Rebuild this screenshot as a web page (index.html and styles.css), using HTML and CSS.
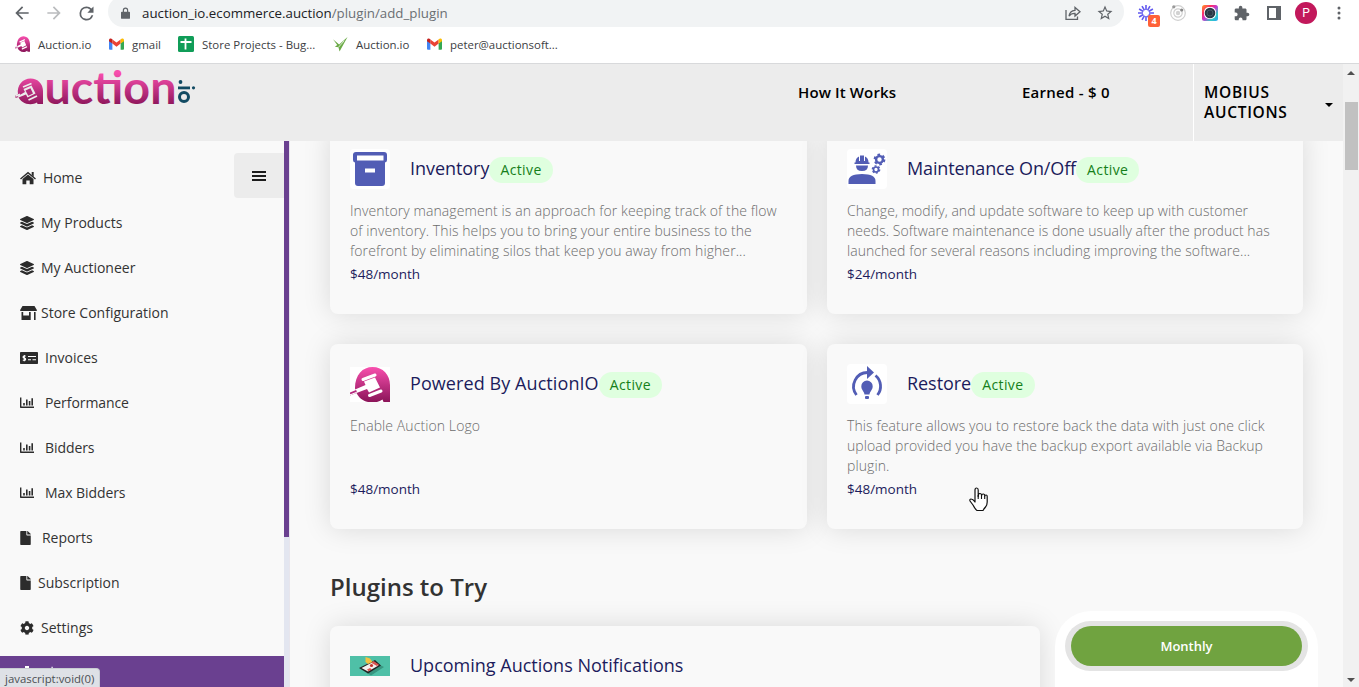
FILE: index.html
```
<!DOCTYPE html>
<html lang="en">
<head>
<meta charset="utf-8">
<title>Plugins</title>
<link rel="stylesheet" href="styles.css">
</head>
<body>
<svg class="defs" width="0" height="0">
  <defs>
    <linearGradient id="pink" x1="0" y1="0" x2="0" y2="1"><stop offset="0" stop-color="#f84fae"/><stop offset="1" stop-color="#8a1458"/></linearGradient>
    <linearGradient id="rainbow" x1="0" y1="0" x2="1" y2="1"><stop offset="0" stop-color="#ff9a1f"/><stop offset=".3" stop-color="#ff2d6a"/><stop offset=".5" stop-color="#c33bd0"/><stop offset=".75" stop-color="#35c9c5"/><stop offset="1" stop-color="#28a7f5"/></linearGradient>
    <symbol id="gavel" viewBox="0 0 40 35">
      <path fill="url(#pink)" d="M22.500 0C33 0 40 8 40 18V35H33.500L32.500 32.500C29.500 34.500 26.500 35.500 22.500 35.500C15 35.500 9 31.500 6.500 26L0 28.500V24.500L5 22.500C4.500 8 12.500 0 22.500 0Z"/>
      <path fill="#fff" d="M14 14.500L25 10.500L30 20.500L19 25.500L17 22L6.500 26L5 22.500L15.500 18Z"/>
      <path fill="#fff" d="M0 23.500L5 21.500L6.500 26L0 28.500Z"/>
      <path stroke="#b52a7d" stroke-width="1.800" d="M0 26.500L6.500 23.800"/>
      <path stroke="#fff" stroke-width="3" stroke-linecap="round" d="M13 12.500L25 8M19.500 28.500L31 24"/>
    </symbol>
    <symbol id="gmail" viewBox="0 0 16 12">
      <path fill="#4285f4" d="M0 2V11a1 1 0 0 0 1 1H3.600V5Z"/><path fill="#34a853" d="M12.400 5V12H15a1 1 0 0 0 1-1V2Z"/>
      <path fill="#ea4335" d="M3.600 1.200L8 4.500L12.400 1.200V5.500L8 8.800L3.600 5.500Z"/><path fill="#c5221f" d="M0 1.800C0 0 2-.6 3.600.8V5.500L0 3Z"/><path fill="#fbbc04" d="M16 1.800C16 0 14-.6 12.400.8V5.500L16 3Z"/>
    </symbol>
    <symbol id="layers" viewBox="0 0 512 512"><path d="M12.410 148.020l232.940 105.670c6.800 3.090 14.490 3.090 21.290 0l232.940-105.670c16.550-7.510 16.550-32.520 0-40.030L266.650 2.310a25.607 25.607 0 0 0-21.290 0L12.410 107.980c-16.550 7.510-16.550 32.530 0 40.040zm487.180 88.280l-58.090-26.330-161.640 73.270c-7.560 3.430-15.590 5.170-23.860 5.170s-16.290-1.740-23.860-5.170L70.510 209.970l-58.100 26.330c-16.550 7.500-16.550 32.500 0 40l232.940 105.590c6.800 3.080 14.490 3.080 21.290 0L499.590 276.300c16.550-7.500 16.550-32.500 0-40zm0 127.800l-57.870-26.230-161.860 73.370c-7.560 3.430-15.590 5.170-23.860 5.170s-16.290-1.740-23.860-5.170L70.290 337.870 12.410 364.100c-16.550 7.500-16.550 32.500 0 40l232.940 105.590c6.800 3.080 14.490 3.080 21.290 0L499.590 404.100c16.550-7.500 16.550-32.500 0-40z"/></symbol>
    <symbol id="file" viewBox="0 0 384 512"><path d="M224 136V0H24C10.700 0 0 10.700 0 24v464c0 13.300 10.700 24 24 24h336c13.300 0 24-10.700 24-24V160H248c-13.200 0-24-10.800-24-24zm160-14.100v6.100H256V0h6.100c6.400 0 12.500 2.500 17 7l97.900 98c4.500 4.500 7 10.600 7 16.900z"/></symbol>
    <symbol id="cog" viewBox="0 0 512 512"><path d="M487.400 315.700l-42.600-24.600c4.300-23.200 4.300-47 0-70.200l42.600-24.600c4.900-2.800 7.100-8.600 5.500-14-11.100-35.600-30-67.800-54.700-94.600-3.800-4.100-10-5.100-14.800-2.300L380.800 110c-17.900-15.400-38.500-27.300-60.800-35.100V25.800c0-5.600-3.900-10.500-9.400-11.700-36.700-8.200-74.300-7.800-109.200 0-5.500 1.200-9.400 6.100-9.400 11.700V75c-22.200 7.900-42.800 19.800-60.800 35.100L88.700 85.500c-4.900-2.800-11-1.900-14.800 2.300-24.700 26.700-43.600 58.900-54.700 94.600-1.700 5.400.6 11.200 5.500 14L67.300 221c-4.300 23.200-4.300 47 0 70.200l-42.600 24.600c-4.900 2.800-7.100 8.600-5.500 14 11.100 35.600 30 67.800 54.700 94.600 3.800 4.100 10 5.100 14.800 2.300l42.600-24.600c17.900 15.400 38.500 27.300 60.800 35.100v49.200c0 5.600 3.900 10.500 9.400 11.700 36.700 8.200 74.300 7.800 109.200 0 5.500-1.200 9.400-6.100 9.400-11.700v-49.200c22.200-7.900 42.800-19.800 60.800-35.100l42.600 24.600c4.900 2.800 11 1.900 14.800-2.300 24.700-26.700 43.600-58.900 54.700-94.600 1.500-5.500-.7-11.300-5.600-14.100zM256 336c-44.100 0-80-35.900-80-80s35.900-80 80-80 80 35.900 80 80-35.900 80-80 80z"/></symbol>
    <symbol id="chart" viewBox="0 0 14 14"><path d="M0 1.500H1.400V10.500H14V12H.7A.7.7 0 0 1 0 11.300ZM3.200 7H4.800V9.500H3.200ZM6 3.500H7.600V9.500H6ZM8.800 5H10.400V9.500H8.800ZM11.400 2.300H13V9.500H11.400Z"/></symbol>
  </defs>
</svg>

<div class="window">
  <header class="browser">
    <div class="toolbar">
      <svg class="tb back" viewBox="0 0 24 24"><path d="M20 11H7.830l5.590-5.590L12 4l-8 8 8 8 1.410-1.410L7.830 13H20v-2z"/></svg>
      <svg class="tb fwd" viewBox="0 0 24 24"><path d="M12 4l-1.410 1.410L16.170 11H4v2h12.170l-5.580 5.590L12 20l8-8z"/></svg>
      <svg class="tb reload" viewBox="0 0 24 24"><path d="M17.650 6.350A7.958 7.958 0 0 0 12 4a8 8 0 1 0 7.730 10h-2.080A6 6 0 1 1 12 6c1.660 0 3.140.69 4.220 1.780L13 11h7V4l-2.350 2.350z"/></svg>
      <div class="omnibox">
        <svg class="lock" viewBox="0 0 10 13"><path fill="#5f6368" d="M1 5H2V3.500a3 3 0 0 1 6 0V5H9a1 1 0 0 1 1 1V12a1 1 0 0 1-1 1H1a1 1 0 0 1-1-1V6A1 1 0 0 1 1 5ZM3.300 5H6.700V3.500a1.700 1.700 0 0 0-3.400 0Z"/></svg>
        <span class="url"><b>auction_io.ecommerce.auction</b>/plugin/add_plugin</span>
        <svg class="share" viewBox="0 0 16 14"><path fill="none" stroke="#5f6368" stroke-width="1.300" d="M1 4V13.300H12.500V10.500M4 10C4.500 6.500 6.500 4.500 10 4.300V1.500L15 5.800L10 10V7.300C7.500 7.200 5.500 8 4 10Z"/></svg>
        <svg class="star" viewBox="0 0 24 24"><path fill="#5f6368" d="M22 9.240l-7.190-.62L12 2 9.190 8.630 2 9.240l5.460 4.730L5.820 21 12 17.270 18.180 21l-1.630-7.030L22 9.240zM12 15.400l-3.760 2.270 1-4.280-3.320-2.880 4.380-.38L12 6.100l1.710 4.040 4.380.38-3.320 2.880 1 4.280L12 15.400z"/></svg>
      </div>
      <div class="ext burst">
        <svg width="16" height="16" viewBox="-8 -8 16 16"><path stroke="#6259ef" stroke-width="1.600" d="M0-8V-3M0 8V3M-6.900-4L-2.600-1.500M6.900 4L2.600 1.500M6.900-4L2.600-1.500M-6.900 4L-2.600 1.500M-4-6.900L-1.500-2.600M4 6.900L1.500 2.600M4-6.900L1.500-2.600M-4 6.900L-1.500 2.600M-8 0H-3M8 0H3"/></svg>
        <span class="count">4</span>
      </div>
      <svg class="ext orbit" viewBox="0 0 16 16"><g fill="none" stroke="#d0d0d0" stroke-width="1.200"><circle cx="8" cy="8" r="7.300"/><circle cx="8" cy="8" r="4.200"/></g><circle cx="8" cy="8" r="2.200" fill="#d2d2d2"/><circle cx="3.800" cy="1.800" r="1.600" fill="#999"/><circle cx="11.700" cy="5" r="1.600" fill="#888"/></svg>
      <svg class="ext lens" viewBox="0 0 16 16"><rect width="16" height="16" rx="2.500" fill="url(#rainbow)"/><rect x="2" y="2" width="12" height="12" rx="5" fill="#fff"/><circle cx="8" cy="8" r="5.300" fill="#293744"/><circle cx="8" cy="8" r="3" fill="none" stroke="#52616c" stroke-width=".8"/></svg>
      <svg class="ext puzzle" viewBox="1 0 23 23"><path fill="#5f6368" d="M20.500 11H19V7c0-1.100-.9-2-2-2h-4V3.500C13 2.120 11.880 1 10.500 1S8 2.120 8 3.500V5H4c-1.100 0-1.990.9-1.990 2v3.800H3.500c1.490 0 2.700 1.210 2.700 2.700s-1.210 2.700-2.700 2.700H2V20c0 1.100.9 2 2 2h3.800v-1.500c0-1.490 1.210-2.700 2.700-2.700 1.490 0 2.700 1.210 2.700 2.700V22H17c1.100 0 2-.9 2-2v-4h1.500c1.380 0 2.500-1.120 2.500-2.500S21.880 11 20.500 11z"/></svg>
      <svg class="ext panel" viewBox="0 0 14 14"><path fill="#5f6368" fill-rule="evenodd" d="M0 0H14V14H0ZM2 2V12H9V2Z"/></svg>
      <span class="avatar">P</span>
      <svg class="dots" viewBox="0 0 4 14"><g fill="#5f6368"><circle cx="2" cy="2" r="1.500"/><circle cx="2" cy="7" r="1.500"/><circle cx="2" cy="12" r="1.500"/></g></svg>
    </div>
    <nav class="bookmarks">
      <a class="bm bm-a"><svg width="15" height="16" viewBox="0 0 40 36" preserveAspectRatio="none"><use href="#gavel"/></svg>Auction.io</a>
      <a class="bm bm-b"><svg width="15" height="12"><use href="#gmail"/></svg>gmail</a>
      <a class="bm bm-c"><svg width="16" height="16" viewBox="0 0 16 16"><rect width="16" height="16" rx="1.500" fill="#109d58"/><path stroke="#fff" stroke-width="1.800" d="M2.500 6H13.500M7.500 2.500V13.500"/></svg>Store Projects - Bug...</a>
      <a class="bm bm-d"><svg width="15" height="16" viewBox="0 0 16 16"><path fill="#6aaa45" d="M0 3L6.500 8.500L15.500.5L7 16L5.800 11.500L2 11L4.500 9Z"/><path stroke="#fff" stroke-width=".8" d="M5.800 11.500L12 4.500"/></svg>Auction.io</a>
      <a class="bm bm-e"><svg width="15" height="12"><use href="#gmail"/></svg>peter@auctionsoft...</a>
    </nav>
  </header>

  <div class="page">
    <div class="site">
      <header class="top">
        <div class="logo">
          <svg width="182" height="36" viewBox="0 0 182 36">
            <defs><linearGradient id="word" gradientUnits="userSpaceOnUse" x1="0" y1="2" x2="0" y2="35"><stop offset="0" stop-color="#f84fae"/><stop offset="1" stop-color="#8a1458"/></linearGradient></defs>
            <path fill="url(#word)" d="M15.500 7.500C23 7.500 28 13 28 20V33H22.500L22 31.500C20 32.700 18 33.200 15.500 33.200C9.500 33.200 5 30 3.500 26L.5 27V24.500L3 23.300C1.500 14 8 7.500 15.500 7.500Z"/>
            <path fill="#ececec" d="M8.500 18L16.500 14.500L20.500 22.500L12.500 26.500L11 23.500L3.500 26.500L3 25L10 21Z"/>
            <path stroke="#ececec" stroke-width="1.800" d="M8 16L16.500 12.500M13.500 29L22 25M1 25L5 23.300"/>
            <path fill="#b12a78" d="M10.500 19.500L15.500 17.300L18 22.500L13.300 24.700Z"/>
            <text class="word" x="29.500" y="33" textLength="132" lengthAdjust="spacingAndGlyphs" fill="url(#word)">uction</text>
            <g fill="#124b63"><circle cx="165.500" cy="11" r="1.900"/><rect x="163" y="15.500" width="12" height="2.800"/><circle cx="178.500" cy="16.800" r="1.600"/></g>
            <circle cx="169" cy="26" r="4.500" fill="none" stroke="#124b63" stroke-width="3"/>
          </svg>
        </div>
        <span class="how">How It Works</span>
        <span class="earned">Earned - $ 0</span>
        <div class="account"><span>MOBIUS<br>AUCTIONS</span><i class="caret"></i></div>
      </header>

      <div class="body">
        <aside class="side">
          <div class="menu">
            <div class="burger"><i></i><i></i><i></i></div>
            <a class="item home"><svg width="16" height="14" viewBox="0 0 16 14"><path d="M8 3.500L13.500 8V12.700A.6.6 0 0 1 13 13.300H9.700V9.500H6.300V13.300H3A.6.600 0 0 1 2.500 12.700V8Z"/><path fill="none" stroke="#2c2c2c" stroke-width="1.400" d="M.5 8L8 1.700L15.500 8"/><path d="M11.700 1H13.700V6L11.700 4Z"/></svg>Home</a>
            <a class="item layers"><svg width="14" height="14"><use href="#layers"/></svg>My Products</a>
            <a class="item layers"><svg width="14" height="14"><use href="#layers"/></svg>My Auctioneer</a>
            <a class="item store"><svg width="17" height="14" viewBox="0 0 17 14"><path d="M2.500 0H14.500L17 4.200Q17 5 16.200 5H.8Q0 5 0 4.200ZM1.500 6H3.200V9.500H9V6H10.700V14H1.500ZM14 6H15.600V14H14Z"/></svg>Store Configuration</a>
            <a class="item invoice"><svg width="18" height="12" viewBox="0 0 18 12"><rect width="18" height="12" rx=".8"/><path stroke="#fff" stroke-width="1.100" fill="none" d="M8 4.500H16M8 7.700H11M12.500 7.700H16M5.700 4H4.200Q3 4 3 5T4.300 6T5.600 7.200T4.300 8.200H2.800M4.300 3V9.300"/></svg>Invoices</a>
            <a class="item chart"><svg width="14" height="14"><use href="#chart"/></svg>Performance</a>
            <a class="item chart"><svg width="14" height="14"><use href="#chart"/></svg>Bidders</a>
            <a class="item chart"><svg width="14" height="14"><use href="#chart"/></svg>Max Bidders</a>
            <a class="item report"><svg width="11" height="14"><use href="#file"/></svg>Reports</a>
            <a class="item sub"><svg width="11" height="14"><use href="#file"/></svg>Subscription</a>
            <a class="item layers"><svg width="14" height="14"><use href="#cog"/></svg>Settings</a>
            <a class="item active"><svg width="34" height="14" viewBox="0 0 34 14"><path d="M5 0H9V4H14V14H0V4H5ZM31.500 .8H32.700V3H31.500Z"/></svg></a>
          </div>
          <div class="track"><i></i></div>
        </aside>

        <main class="content">
          <div class="grid">
            <section class="card">
              <div class="head"><svg class="pic" viewBox="0 0 40 40"><rect width="40" height="40" rx="4" fill="#fff"/><path fill="#525db5" d="M6 3H34Q37 3 37 6V11Q37 13 35 13.500V34Q35 37 32 37H8Q5 37 5 34V13.500Q3 13 3 11V6Q3 3 6 3Z"/><path fill="#fff" d="M7 6.500H33.500V11.500H7ZM15 19.500H25V23.500H15Z"/></svg><h3>Inventory</h3><span class="pill">Active</span></div>
              <p>Inventory management is an approach for keeping track of the flow<br>of inventory. This helps you to bring your entire business to the<br>forefront by eliminating silos that keep you away from higher...</p>
              <div class="price">$48/month</div>
            </section>
            <section class="card">
              <div class="head"><svg class="pic" viewBox="0 0 40 40"><rect width="40" height="40" rx="4" fill="#fff"/><g fill="#525db5"><path d="M1.500 35V32Q1.500 25 15 25T28.500 32V35ZM9 16.500H21Q21 22 15 22T9 16.500ZM7.500 15V13.500H8.500Q8.500 9 12 7.500V12H13V6.500H17V12H18V7.500Q21.500 9 21.500 13.500H22.500V15Z"/></g><g fill="none" stroke="#525db5"><circle cx="32.500" cy="10.500" r="3.400" stroke-width="2.400"/><circle cx="32.500" cy="10.500" r="4.900" stroke-width="2" stroke-dasharray="2.600 2.531"/><circle cx="29" cy="20.500" r="2.500" stroke-width="1.700"/><circle cx="29" cy="20.500" r="3.600" stroke-width="1.500" stroke-dasharray="1.900 1.870"/></g></svg><h3 class="t-maint">Maintenance On/Off</h3><span class="pill">Active</span></div>
              <p class="tight">Change, modify, and update software to keep up with customer<br>needs. Software maintenance is done usually after the product has<br>launched for several reasons including improving the software...</p>
              <div class="price">$24/month</div>
            </section>
            <section class="card">
              <div class="head"><svg class="pic gav" viewBox="0 0 40 35"><rect width="40" height="35" fill="#fff"/><use href="#gavel"/></svg><h3 class="t-power">Powered By AuctionIO</h3><span class="pill">Active</span></div>
              <p>Enable Auction Logo</p>
              <div class="price">$48/month</div>
            </section>
            <section class="card">
              <div class="head"><svg class="pic" viewBox="0 0 40 40"><rect width="40" height="40" rx="4" fill="#fff"/><g fill="none" stroke="#525db5" stroke-width="2.800"><path d="M9.500 31A14 14 0 0 1 21 8.500M28.500 11.500A14 14 0 0 1 30.500 31"/></g><g fill="#525db5"><path d="M20 2L27 8.500L20 15Z"/><path d="M20 16.500A5.700 5.700 0 0 1 25.700 22.200C25.700 26 23 27 22.500 30.500H17.500C17 27 14.300 26 14.300 22.200A5.700 5.700 0 0 1 20 16.500Z"/><rect x="18" y="32" width="4" height="3" rx="1"/></g></svg><h3>Restore</h3><span class="pill">Active</span></div>
              <p>This feature allows you to restore back the data with just one click<br>upload provided you have the backup export available via Backup<br>plugin.</p>
              <div class="price">$48/month</div>
            </section>
          </div>
          <h2>Plugins to Try</h2>
          <div class="try">
            <section class="card wide">
              <div class="head"><svg class="pic thumb" viewBox="0 0 40 20"><rect width="40" height="20" fill="#4fc0a7"/><path fill="#389680" d="M17 17L30 9L34 11L21 19.500Z"/><path fill="#222" d="M9 12L25 4L31 9.500L18 17.500Z"/><path fill="#f3f1ee" d="M11.500 12L24 5.500L28.500 9.500L18 15.500Z"/><path fill="#d9534f" d="M23 5L29 8.500L27 10L21.500 7ZM17 13.500L20 12L22 13.500L18.500 15.300Z"/><path fill="#f2c242" d="M15.500 1L20 2.500L22.500 6L18 8L15.500 6Z"/><circle cx="21.500" cy="9.500" r="1.600" fill="#c4302b"/></svg><h3>Upcoming Auctions Notifications</h3></div>
            </section>
            <aside class="billing"><div class="ring"><span>Monthly</span></div></aside>
          </div>
        </main>
      </div>
    </div>
    <div class="scrollbar"><i class="up"></i><b></b><i class="down"></i></div>
  </div>

  <div class="status">javascript:void(0)</div>
  <svg class="cursor" viewBox="0 0 19 25"><path fill="#fff" stroke="#111" stroke-width="1.200" stroke-linejoin="round" d="M6 15V3Q6 1 7.600 1T9.200 3V9.500Q9.200 6.500 10.900 6.500T12.600 8.500Q12.600 7 14.200 7T15.700 9Q15.700 8 17 8T18.200 10V15Q18.200 18 16.500 20T14 23.500H8Q6 22 4 18L1 14Q.5 12 2 12Q4 12 6 15Z"/><path stroke="#111" stroke-width="1.100" d="M9.200 8V12M12.500 8V12M15.700 9V12"/></svg>
</div>
</body>
</html>
```
FILE: styles.css
```
* { box-sizing: border-box; }
body { margin: 0; font-family: "Open Sans", "Noto Sans", sans-serif; background: #f9f9f9; }
svg { display: block; flex: none; }
.defs { position: absolute; }
.window { position: relative; width: 1359px; height: 687px; overflow: hidden; display: flex; flex-direction: column; }

/* browser bar */
.browser { flex: none; height: 64px; background: #fff; border-bottom: 1px solid #d8d9db; }
.toolbar { height: 26px; display: flex; align-items: center; padding-left: 12px; }
.tb { width: 20px; height: 20px; fill: #5f6368; margin-right: 12px; }
.fwd { fill: #babcbe; }
.reload { width: 21px; height: 21px; margin-right: 11px; }
.omnibox { width: 1016px; height: 31px; margin-top: -3px; padding: 3px 10px 0 13px; border-radius: 16px; background: #f1f3f4; display: flex; align-items: center; }
.lock { width: 9px; height: 12px; margin-right: 12px; }
.url { flex: 1; font-size: 13.3px; line-height: 20px; color: #6b6f73; }
.url b { font-weight: 400; color: #202124; }
.share { width: 16px; height: 14px; margin-right: 15px; }
.star { width: 18px; height: 18px; }
.ext { width: 16px; height: 16px; margin-right: 16px; }
.burst { position: relative; margin-left: 14px; }
.count { position: absolute; left: 10px; top: 10px; width: 12px; height: 12px; border-radius: 2px; background: #ff6238; color: #fff; font: 700 9px/12px "Open Sans", sans-serif; text-align: center; }
.puzzle { margin-right: 17px; }
.panel { width: 14px; height: 14px; margin-right: 14px; }
.avatar { width: 22px; height: 22px; border-radius: 50%; background: #c2185b; color: #fff; font: 12px/22px Roboto, sans-serif; text-align: center; margin-right: 20px; }
.dots { width: 4px; height: 14px; }
.bookmarks { height: 36px; display: flex; align-items: center; padding-left: 15px; }
.bm { display: flex; align-items: center; gap: 8px; font-size: 11.450px; color: #3c4043; white-space: nowrap; }
.bm-a { width: 94px; }
.bm-b { width: 69px; }
.bm-c { width: 155px; }
.bm-d { width: 94px; }

/* page frame */
.page { flex: 1; min-height: 0; display: flex; }
.site { width: 1343px; display: flex; flex-direction: column; }
.scrollbar { width: 16px; background: #f1f1f1; padding: 7px 2px 0; display: flex; flex-direction: column; align-items: center; position: relative; }
.scrollbar b { width: 13px; height: 68px; background: #c1c1c1; margin-top: 27px; }
.up { border: 4px solid transparent; border-top: 0; border-bottom: 4px solid #505050; }
.down { border: 4px solid transparent; border-bottom: 0; border-top: 4px solid #505050; margin-top: auto; margin-bottom: 5px; }

.top { position: relative; z-index: 2; flex: none; height: 77px; background: #ececec; display: flex; align-items: flex-start; font-weight: 600; color: #000; }
.logo { width: 798px; padding: 7px 0 0 15px; }
.logo svg { overflow: visible; }
.word { font: 700 45px Lato, sans-serif; }
.how { width: 224px; padding-top: 17px; font-size: 15px; line-height: 22px; letter-spacing: .12px; }
.earned { width: 171px; padding-top: 17px; font-size: 15px; line-height: 22px; letter-spacing: .25px; }
.account { width: 150px; height: 77px; border-left: 1px solid #fff; padding: 18px 10px 0; font-size: 15.500px; line-height: 20px; letter-spacing: .7px; display: flex; justify-content: space-between; }
.caret { margin-top: 21px; border: 4px solid transparent; border-top-color: #000; height: 0; border-bottom: 0; }

.body { flex: 1; min-height: 0; display: flex; }
.side { position: relative; z-index: 1; width: 290px; display: flex; background: #f9f9f9; }
.menu { position: relative; width: 284px; padding-top: 14px; overflow: hidden; }
.burger { position: absolute; right: 0; top: 12px; width: 50px; height: 45px; padding: 18px 18px 0; background: #ececec; border-radius: 4px 0 0 4px; }
.burger i { display: block; width: 14px; height: 2px; margin-bottom: 2px; background: #1c1c1c; }
.item { display: flex; align-items: center; height: 45px; padding-left: 20px; gap: 7px; font-size: 14px; color: #333; }
.item svg { fill: #2c2c2c; }
.home { letter-spacing: -.1px; }
.store { gap: 4px; }
.chart { gap: 11px; letter-spacing: -.08px; }
.report { gap: 11px; letter-spacing: -.05px; }
.item.active { align-items: flex-start; margin-top: 6px; padding-top: 10px; background: #6a4090; color: #fff; }
.item.active svg { fill: #fff; }
.track { width: 6px; background: #e3e6f0; border-right: 1px solid #e7e5ec; }
.track i { display: block; width: 5px; height: 396px; background: #6a4090; }

.content { flex: 1; height: 546px; overflow: hidden; padding-left: 40px; background: #f9f9f9; }
.grid { display: grid; grid-template-columns: 477px 476px; column-gap: 20px; row-gap: 30px; margin-top: -12px; }
.card { height: 185px; padding: 20px; border-radius: 8px; background: #f9f9f9; box-shadow: 0 0 28px rgba(0, 0, 0, .13); }
.head { display: flex; align-items: center; height: 40px; }
.pic { width: 40px; height: 40px; margin-right: 20px; }
.gav { height: 35px; }
.thumb { height: 20px; }
h3 { margin: -2px 0 0; font-size: 18px; font-weight: 400; line-height: 24px; letter-spacing: -.05px; color: #1c1c5c; white-space: nowrap; }
.t-maint { letter-spacing: -.14px; }
.t-power { letter-spacing: .08px; }
.wide h3 { letter-spacing: 0; }
.pill { height: 26px; padding: 0 11px; margin: 2px 0 0; border-radius: 13px; background: #dfffdf; color: #15801a; font-size: 14px; line-height: 26px; letter-spacing: .4px; }
.card p { margin: 12px 0 0; height: 60px; font-size: 14px; font-weight: 300; line-height: 20px; letter-spacing: .09px; color: #6c6c6c; white-space: nowrap; }
.card p.tight { letter-spacing: .05px; }
.price { margin-top: 3px; font-size: 13.500px; line-height: 20px; color: #1c1c5c; }
h2 { margin: 40px 0 0; font-size: 24px; font-weight: 600; line-height: 36px; color: #333; }
.try { display: flex; gap: 15px; margin-top: 21px; }
.wide { width: 710px; }
.billing { position: relative; width: 263px; height: 185px; margin-top: -15px; padding: 10px; border-radius: 36px; background: #fff; }
.ring { height: 50px; padding: 5px 6px; border-radius: 25px; background: #e4e4e4; }
.ring span { display: block; height: 40px; border-radius: 20px; background: #70a340; color: #fff; font-size: 13px; font-weight: 600; line-height: 40px; text-align: center; }

/* overlays */
.status { position: absolute; left: 0; bottom: 0; z-index: 5; width: 100px; height: 19px; padding-left: 5px; border: 1px solid #c9ccd2; border-width: 1px 1px 0 0; border-radius: 0 4px 0 0; background: #dee1e6; color: #4b4f53; font-size: 11.400px; line-height: 20px; }
.cursor { position: absolute; left: 969px; top: 487px; z-index: 5; width: 19px; height: 25px; }
```
